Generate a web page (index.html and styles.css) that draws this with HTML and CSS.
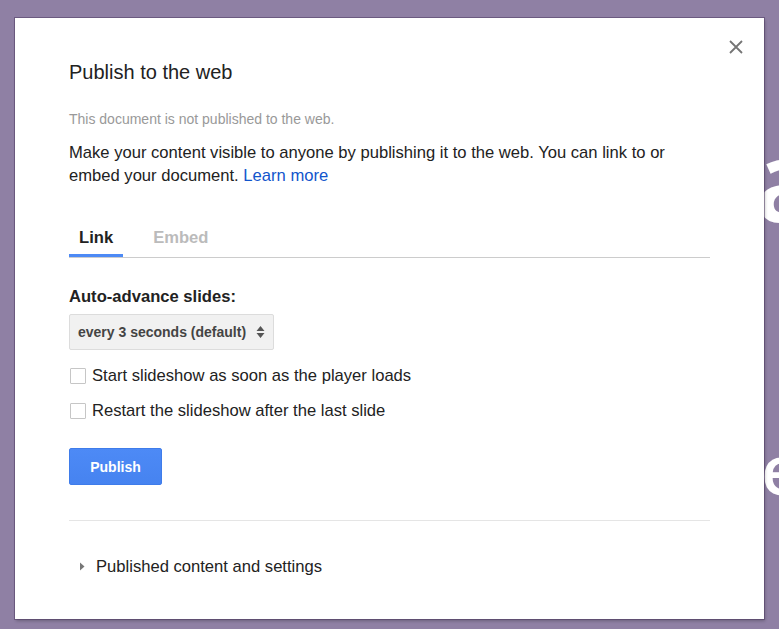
FILE: index.html
```html
<!DOCTYPE html>
<html>
<head>
<meta charset="utf-8">
<link rel="stylesheet" href="styles.css">
</head>
<body>
<div class="bg-letter bg-a">a</div>
<div class="bg-letter bg-e">e</div>
<div class="dialog">
  <button class="close" aria-label="Close">
    <svg width="16" height="16" viewBox="0 0 16 16"><path d="M2 2L14 14M14 2L2 14" stroke="#757575" stroke-width="1.8" fill="none"/></svg>
  </button>
  <h1 class="title">Publish to the web</h1>
  <p class="status">This document is not published to the web.</p>
  <p class="desc">Make your content visible to anyone by publishing it to the web. You can link to or embed your document. <a href="#" class="link">Learn more</a></p>
  <div class="tabs">
    <div class="tab active">Link</div>
    <div class="tab">Embed</div>
  </div>
  <div class="label">Auto-advance slides:</div>
  <div class="select">
    <span>every 3 seconds (default)</span>
    <svg width="9" height="14" viewBox="0 0 9 14"><path d="M4.5 1L8.5 6H0.5Z M4.5 13L8.5 8H0.5Z" fill="#555"/></svg>
  </div>
  <label class="check"><span class="box"></span>Start slideshow as soon as the player loads</label>
  <label class="check"><span class="box"></span>Restart the slideshow after the last slide</label>
  <button class="publish">Publish</button>
  <div class="sep"></div>
  <div class="expander">
    <svg width="6" height="9" viewBox="0 0 6 9"><path d="M1 0.5L5.5 4.5L1 8.5Z" fill="#777"/></svg>
    <span>Published content and settings</span>
  </div>
</div>
</body>
</html>
```
FILE: styles.css
```css
html, body {
  margin: 0;
  padding: 0;
  overflow: hidden;
}
body {
  width: 779px;
  height: 629px;
  background: #8f80a4;
  position: relative;
  font-family: Arial, "Liberation Sans", sans-serif;
}
.bg-letter {
  position: absolute;
  color: #fff;
  font-family: "Open Sans", Arial, sans-serif;
  font-weight: 600;
  line-height: 1;
}
.bg-a { left: 755px; top: 120px; font-size: 115px; }
.bg-e { left: 761px; top: 434px; font-size: 69px; }
.dialog {
  position: absolute;
  left: 15px;
  top: 18px;
  height: 601px;
  box-sizing: border-box;
  padding: 0 54px;
  width: 749px;
  background: #fff;
  box-shadow: 0 0 0 1px rgba(80,60,100,0.55), 1px 2px 3px rgba(0,0,0,0.25);
  color: #222;
}
.close {
  position: absolute;
  right: 20px;
  top: 21px;
  background: none;
  border: 0;
  padding: 0;
  width: 16px;
  height: 16px;
  cursor: pointer;
}
.close svg { display: block; }
.title {
  margin: 42px 0 0;
  font-size: 20px;
  font-weight: normal;
  line-height: 24px;
  color: #222;
}
.status {
  margin: 27px 0 0;
  font-size: 14px;
  line-height: 16px;
  color: #999;
}
.desc {
  margin: 14px 0 0;
  font-size: 16.6px;
  line-height: 23px;
  color: #222;
}
.link {
  color: #1155cc;
  text-decoration: none;
}
.tabs {
  display: flex;
  margin-top: 37px;
  border-bottom: 1px solid #ccc;
  height: 33px;
}
.tab {
  font-size: 16.6px;
  font-weight: bold;
  color: #bbb;
  padding: 4px 10px 0;
  margin-right: 20px;
  line-height: 19px;
  box-sizing: border-box;
  height: 33px;
}
.tab.active {
  color: #222;
  border-bottom: 3px solid #4d8af5;
  height: 33px;
}
.label {
  margin-top: 29px;
  font-size: 16.6px;
  font-weight: bold;
  line-height: 19px;
  color: #222;
}
.select {
  margin-top: 8px;
  width: 205px;
  height: 36px;
  box-sizing: border-box;
  background: #f1f1f1;
  border: 1px solid #dcdcdc;
  border-radius: 2px;
  display: flex;
  align-items: center;
  justify-content: space-between;
  padding: 0 8px 0 8px;
  font-size: 14px;
  font-weight: bold;
  color: #444;
}
.check {
  display: flex;
  align-items: center;
  font-size: 16.6px;
  line-height: 19px;
  color: #222;
  margin-top: 16px;
}
.check + .check { margin-top: 16px; }
.box {
  border: 1px solid #c6c6c6;
  border-radius: 1px;
  margin: 0 6px 0 1px;
  box-sizing: border-box;
  width: 16px;
  height: 16px;
}
.publish {
  display: block;
  margin-top: 28px;
  width: 93px;
  height: 37px;
  background: linear-gradient(#4d8af6, #4683f0);
  border: 1px solid #3f7cea;
  border-radius: 2px;
  color: #fff;
  font-family: Arial, "Liberation Sans", sans-serif;
  font-size: 14px;
  font-weight: bold;
  padding: 0;
}
.sep {
  margin-top: 35px;
  height: 1px;
  background: #e5e5e5;
}
.expander {
  display: flex;
  align-items: center;
  margin-top: 36px;
  font-size: 16.6px;
  line-height: 19px;
  color: #222;
}
.expander svg {
  margin: 0 11px 0 10px;
}
```
